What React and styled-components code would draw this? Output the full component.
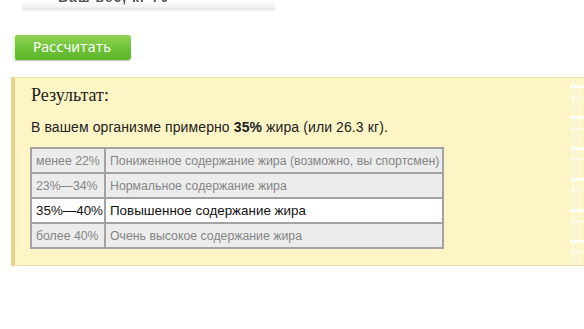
import styled, { createGlobalStyle } from "styled-components";

const Global = createGlobalStyle`
  body {
    margin: 0;
    background: #fff;
    font-family: "Liberation Sans", Arial, sans-serif;
  }
`;

const Page = styled.div`
  width: 584px;
  height: 329px;
  overflow: hidden;
  padding-left: 11px;
  box-sizing: border-box;
`;

const TopStrip = styled.div`
  margin-left: 11px;
  width: 253px;
  height: 12px;
  overflow: hidden;
  background: linear-gradient(#fff 0%, #f4f4f4 55%, #e6e6e6 75%, #fff 100%);
  filter: blur(0.6px);
  span {
    display: block;
    margin-top: -11px;
    padding-left: 36px;
    font-size: 14px;
    font-weight: bold;
    color: #555;
    letter-spacing: 1px;
  }
`;

const CalcButton = styled.button`
  display: block;
  margin: 23px 0 0 2px;
  width: 118px;
  height: 25px;
  padding: 0 0 1px 18px;
  text-align: left;
  border: none;
  border-left: 2px solid #e9f7dd;
  border-radius: 3px;
  background: linear-gradient(#92d456, #6cc236 55%, #5db62b);
  box-shadow: 0 1px 1px rgba(0, 0, 0, 0.25);
  color: #fff;
  font-family: "DejaVu Sans", Verdana, sans-serif;
  font-size: 13.5px;
  letter-spacing: -0.2px;
`;

const ResultBox = styled.div`
  position: relative;
  margin-top: 17px;
  width: 573px;
  height: 189px;
  box-sizing: border-box;
  padding: 7px 0 0 16px;
  background: #fdf5c6;
  border-top: 1px solid #efe2a8;
  border-left: 4px solid #ecd08b;
  border-bottom: 1px solid #efe2a8;
  &::after {
    content: "";
    position: absolute;
    top: 0;
    right: 0;
    width: 14px;
    height: 100%;
    background:
      repeating-linear-gradient(
        180deg,
        transparent 0 7px,
        #fff 7px 10px,
        transparent 10px 19px,
        #fff 19px 20px,
        transparent 20px 31px
      ),
      linear-gradient(90deg, #fdf5c6 0 3px, #fff 3px 4px, #fdf5c6 4px 9px, #fff 9px 10px, #fdf5c6 10px);
    opacity: 0.85;
  }
`;

const Title = styled.div`
  font-family: "Liberation Serif", "Times New Roman", serif;
  font-size: 18px;
  line-height: 21px;
  color: #222;
`;

const Summary = styled.p`
  margin: 12px 0 0;
  font-size: 14px;
  line-height: 18px;
  letter-spacing: 0.1px;
  color: #222;
`;

const RangeTable = styled.table`
  margin: 11px 0 0 -1px;
  width: 414px;
  border-collapse: collapse;
  border: 2px solid #a2a2a2;
`;

const Cell = styled.td`
  height: 23px;
  padding: 0 0 0 4px;
  border: 2px solid #a2a2a2;
  background: ${(p) => (p.$active ? "#fff" : "#ececec")};
  color: ${(p) => (p.$active ? "#111" : "#858585")};
  font-size: ${(p) => (p.$active ? "13.4px" : "12.3px")};
  white-space: nowrap;
  &:first-child {
    width: 68px;
  }
`;

const ranges = [
  ["менее 22%", "Пониженное содержание жира (возможно, вы спортсмен)"],
  ["23%—34%", "Нормальное содержание жира"],
  ["35%—40%", "Повышенное содержание жира", true],
  ["более 40%", "Очень высокое содержание жира"],
];

export default function App() {
  return (
    <>
      <Global />
      <Page>
        <TopStrip>
          <span>Ваш вес, кг 70</span>
        </TopStrip>
        <CalcButton>Рассчитать</CalcButton>
        <ResultBox>
          <Title>Результат:</Title>
          <Summary>
            В вашем организме примерно <b>35%</b> жира (или 26.3 кг).
          </Summary>
          <RangeTable>
            <tbody>
              {ranges.map(([range, label, active]) => (
                <tr key={range}>
                  <Cell $active={active}>{range}</Cell>
                  <Cell $active={active}>{label}</Cell>
                </tr>
              ))}
            </tbody>
          </RangeTable>
        </ResultBox>
      </Page>
    </>
  );
}
